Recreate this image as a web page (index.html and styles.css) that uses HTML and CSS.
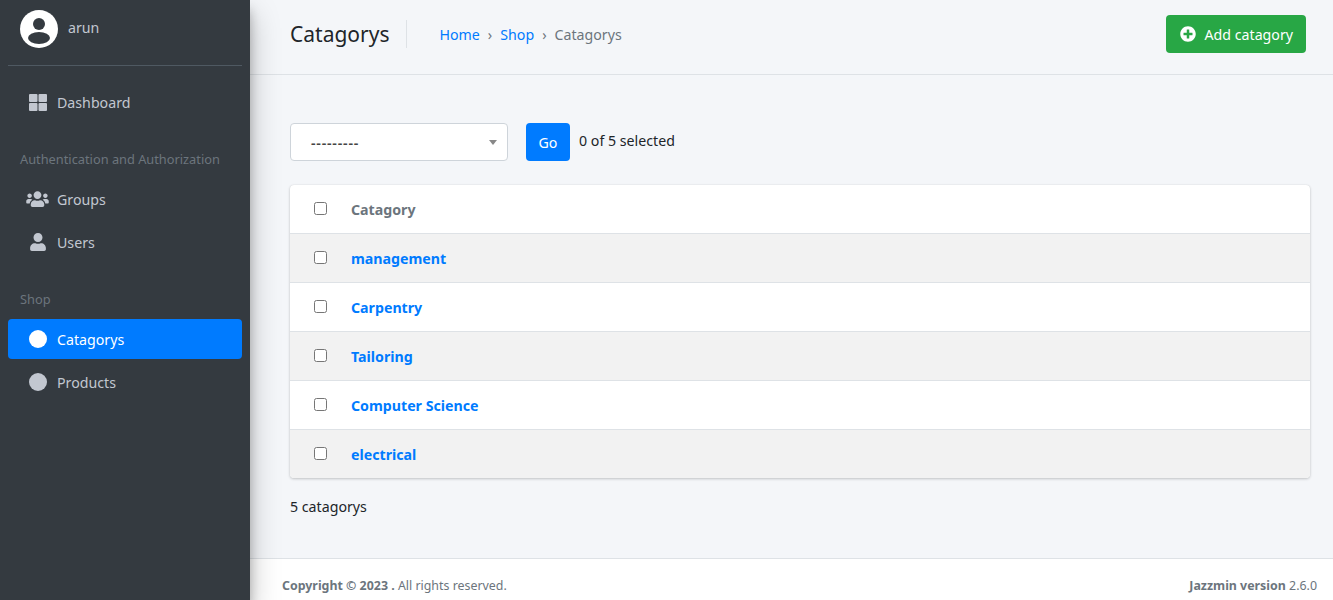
FILE: index.html
```html
<!DOCTYPE html>
<html lang="en">
<head>
<meta charset="UTF-8">
<meta name="viewport" content="width=device-width, initial-scale=1.0">
<title>Catagorys</title>
<link rel="stylesheet" href="styles.css">
</head>
<body>
<div class="app">
    <aside class="sidebar">
        <div class="user-panel">
            <svg class="avatar" viewBox="0 0 38 38"><circle cx="19" cy="19" r="19" fill="#fff"/><circle cx="19" cy="14" r="6" fill="#343a40"/><ellipse cx="19" cy="28" rx="11" ry="6" fill="#343a40"/></svg>
            <span class="user-name">arun</span>
        </div>
        <nav class="nav">
            <a class="nav-item" href="#">
                <span class="nav-icon"><svg class="ico-dash" viewBox="0 0 18 17"><rect width="8.5" height="8" rx="1"/><rect x="9.5" width="8.5" height="8" rx="1"/><rect y="9" width="8.5" height="8" rx="1"/><rect x="9.5" y="9" width="8.5" height="8" rx="1"/></svg></span>
                Dashboard
            </a>
            <div class="nav-header">Authentication and Authorization</div>
            <a class="nav-item" href="#">
                <span class="nav-icon"><svg class="ico-users" viewBox="0 0 640 512"><path d="M96 224c35.3 0 64-28.7 64-64s-28.7-64-64-64-64 28.7-64 64 28.7 64 64 64zm448 0c35.3 0 64-28.7 64-64s-28.7-64-64-64-64 28.7-64 64 28.7 64 64 64zm32 32h-64c-17.6 0-33.5 7.1-45.1 18.6 40.3 22.1 68.9 62 75.1 109.4h66c17.7 0 32-14.3 32-32v-32c0-35.3-28.7-64-64-64zm-256 0c61.9 0 112-50.1 112-112S381.9 32 320 32 208 82.1 208 144s50.1 112 112 112zm76.8 32h-8.3c-20.8 10-43.9 16-68.5 16s-47.6-6-68.5-16h-8.3C179.6 288 128 339.6 128 403.2V432c0 26.5 21.5 48 48 48h288c26.5 0 48-21.5 48-48v-28.8c0-63.6-51.6-115.2-115.2-115.2zm-223.7-13.4C161.5 263.1 145.6 256 128 256H64c-35.3 0-64 28.7-64 64v32c0 17.7 14.3 32 32 32h65.9c6.3-47.4 34.9-87.3 75.2-109.4z"/></svg></span>
                Groups
            </a>
            <a class="nav-item" href="#">
                <span class="nav-icon"><svg class="ico-user" viewBox="0 0 448 512"><path d="M224 256c70.7 0 128-57.3 128-128S294.7 0 224 0 96 57.3 96 128s57.3 128 128 128zm89.6 32h-16.7c-22.2 10.2-46.9 16-72.9 16s-50.6-5.8-72.9-16h-16.7C60.2 288 0 348.2 0 422.4V464c0 26.5 21.5 48 48 48h352c26.5 0 48-21.5 48-48v-41.6c0-74.2-60.2-134.4-134.4-134.4z"/></svg></span>
                Users
            </a>
            <div class="nav-header">Shop</div>
            <a class="nav-item active" href="#">
                <span class="nav-icon"><span class="dot"></span></span>
                Catagorys
            </a>
            <a class="nav-item" href="#">
                <span class="nav-icon"><span class="dot"></span></span>
                Products
            </a>
        </nav>
    </aside>

    <div class="main">
        <header class="page-header">
            <h1>Catagorys</h1>
            <ol class="breadcrumb">
                <li><a href="#">Home</a></li>
                <li class="sep">›</li>
                <li><a href="#">Shop</a></li>
                <li class="sep">›</li>
                <li class="current">Catagorys</li>
            </ol>
            <a class="btn-add" href="#">
                <svg viewBox="0 0 512 512"><path d="M256 8C119 8 8 119 8 256s111 248 248 248 248-111 248-248S393 8 256 8zm144 276c0 6.6-5.4 12-12 12h-92v92c0 6.6-5.4 12-12 12h-56c-6.6 0-12-5.4-12-12v-92h-92c-6.6 0-12-5.4-12-12v-56c0-6.6 5.4-12 12-12h92v-92c0-6.6 5.4-12 12-12h56c6.6 0 12 5.4 12 12v92h92c6.6 0 12 5.4 12 12v56z"/></svg>
                Add catagory
            </a>
        </header>

        <section class="content">
            <div class="actions">
                <div class="select">---------<span class="caret"></span></div>
                <button class="btn-go">Go</button>
                <span class="counter">0 of 5 selected</span>
            </div>
            <div class="card">
                <table>
                    <thead>
                        <tr><td class="check"><input type="checkbox"></td><th>Catagory</th></tr>
                    </thead>
                    <tbody>
                        <tr><td class="check"><input type="checkbox"></td><td><a href="#">management</a></td></tr>
                        <tr><td class="check"><input type="checkbox"></td><td><a href="#">Carpentry</a></td></tr>
                        <tr><td class="check"><input type="checkbox"></td><td><a href="#">Tailoring</a></td></tr>
                        <tr><td class="check"><input type="checkbox"></td><td><a href="#">Computer Science</a></td></tr>
                        <tr><td class="check"><input type="checkbox"></td><td><a href="#">electrical</a></td></tr>
                    </tbody>
                </table>
            </div>
            <p class="total">5 catagorys</p>
        </section>

        <footer class="footer">
            <div><b>Copyright © 2023 .</b> All rights reserved.</div>
            <div><b>Jazzmin version</b> 2.6.0</div>
        </footer>
    </div>
</div>
</body>
</html>
```

FILE: styles.css
```css
* {
    box-sizing: border-box;
}
html, body {
    height: 100%;
}
body {
    margin: 0;
    font-family: "Noto Sans", "Open Sans", sans-serif;
    font-size: 14.2px;
    color: #212529;
    background-color: #f4f6f9;
    overflow: hidden;
}
a {
    text-decoration: none;
}
.app {
    display: flex;
    height: 600px;
}

/* sidebar */
.sidebar {
    flex: 0 0 250px;
    background-color: #343a40;
    padding: 0 8px;
    box-shadow: 0 14px 28px rgba(0, 0, 0, 0.25), 0 10px 10px rgba(0, 0, 0, 0.22);
    position: relative;
    z-index: 2;
}
.user-panel {
    display: flex;
    align-items: center;
    gap: 10px;
    height: 66px;
    padding: 0 0 8px 12px;
    border-bottom: 1px solid #4f5962;
    color: #c2c7d0;
}
.avatar {
    width: 38px;
    height: 38px;
}
.user-name {
    margin-bottom: 2px;
}
.nav {
    padding-top: 16px;
}
.nav-item {
    display: flex;
    align-items: center;
    height: 40px;
    padding-left: 20px;
    border-radius: 4px;
    color: #c2c7d0;
}
.nav-item + .nav-item {
    margin-top: 3px;
}
.nav-icon {
    display: flex;
    align-items: center;
    justify-content: center;
    width: 20px;
    margin-right: 9px;
    fill: #c2c7d0;
}
.ico-dash {
    width: 18px;
    height: 17px;
}
.ico-users {
    width: 23px;
    height: 18px;
    flex: none;
    margin-left: -1px;
}
.ico-user {
    width: 16px;
    height: 18px;
}
.dot {
    width: 18px;
    height: 18px;
    border-radius: 50%;
    background-color: #c2c7d0;
}
.nav-item.active {
    background-color: #007bff;
    color: #fff;
}
.nav-item.active .dot {
    background-color: #fff;
}
.nav-header {
    padding: 27px 12px 10px;
    font-size: 12.8px;
    line-height: 20px;
    color: #6c757d;
    white-space: nowrap;
}

/* main */
.main {
    flex: 1;
    display: flex;
    flex-direction: column;
    min-width: 0;
}
.page-header {
    display: flex;
    align-items: center;
    height: 75px;
    padding: 0 27px 6px 40px;
    border-bottom: 1px solid #dee2e6;
}
.page-header h1 {
    margin: 0;
    padding: 2px 17px 2px 0;
    border-right: 1px solid #dee2e6;
    font-size: 21px;
    font-weight: 400;
    line-height: 24px;
}
.breadcrumb {
    display: flex;
    gap: 8px;
    margin: 0;
    padding: 0 0 0 32px;
    list-style: none;
}
.breadcrumb a {
    color: #007bff;
}
.sep, .current {
    color: #6c757d;
}
.btn-add {
    display: flex;
    align-items: center;
    gap: 9px;
    height: 38px;
    margin-left: auto;
    padding: 0 13px 0 14px;
    border-radius: 4px;
    background-color: #28a745;
    color: #fff;
}
.btn-add svg {
    width: 16px;
    height: 16px;
    fill: #fff;
}
.content {
    padding: 48px 23px 0 40px;
}
.actions {
    display: flex;
    align-items: center;
    height: 38px;
}
.select {
    display: flex;
    align-items: center;
    width: 218px;
    height: 38px;
    padding: 0 20px;
    background-color: #fff;
    border: 1px solid #ced4da;
    border-radius: 4px;
    color: #444;
    font-weight: 600;
    letter-spacing: 0.8px;
    position: relative;
}
.caret {
    position: absolute;
    right: 10px;
    top: 16px;
    border-style: solid;
    border-width: 5px 4px 0;
    border-color: #888 transparent transparent;
}
.btn-go {
    width: 44px;
    height: 38px;
    margin-left: 18px;
    padding: 0;
    border: 0;
    border-radius: 4px;
    background-color: #007bff;
    color: #fff;
    font: inherit;
}
.counter {
    margin: 0 0 4px 9px;
}
.card {
    margin-top: 24px;
    background-color: #fff;
    border-radius: 4px;
    box-shadow: 0 0 1px rgba(0, 0, 0, 0.125), 0 1px 3px rgba(0, 0, 0, 0.2);
    overflow: hidden;
}
table {
    width: 100%;
    border-collapse: collapse;
}
td, th {
    height: 49px;
    padding: 2px 0 0;
    text-align: left;
    font-weight: 700;
}
thead td, thead th {
    height: 48px;
}
thead th {
    color: #6c757d;
}
tbody tr {
    border-top: 1px solid #dee2e6;
}
tbody tr:nth-child(odd) {
    background-color: #f2f2f2;
}
tbody a {
    color: #007bff;
}
.check {
    width: 61px;
    padding-left: 24px;
}
.check input {
    display: block;
    width: 13px;
    height: 13px;
    margin: 0 0 2px;
}
.total {
    margin: 19px 0 0;
    line-height: 20px;
}
.footer {
    display: flex;
    justify-content: space-between;
    align-items: center;
    height: 42px;
    margin-top: auto;
    padding: 12px 16px 0 32px;
    background-color: #fff;
    border-top: 1px solid #dee2e6;
    font-size: 12.4px;
    color: #6c757d;
}
```
